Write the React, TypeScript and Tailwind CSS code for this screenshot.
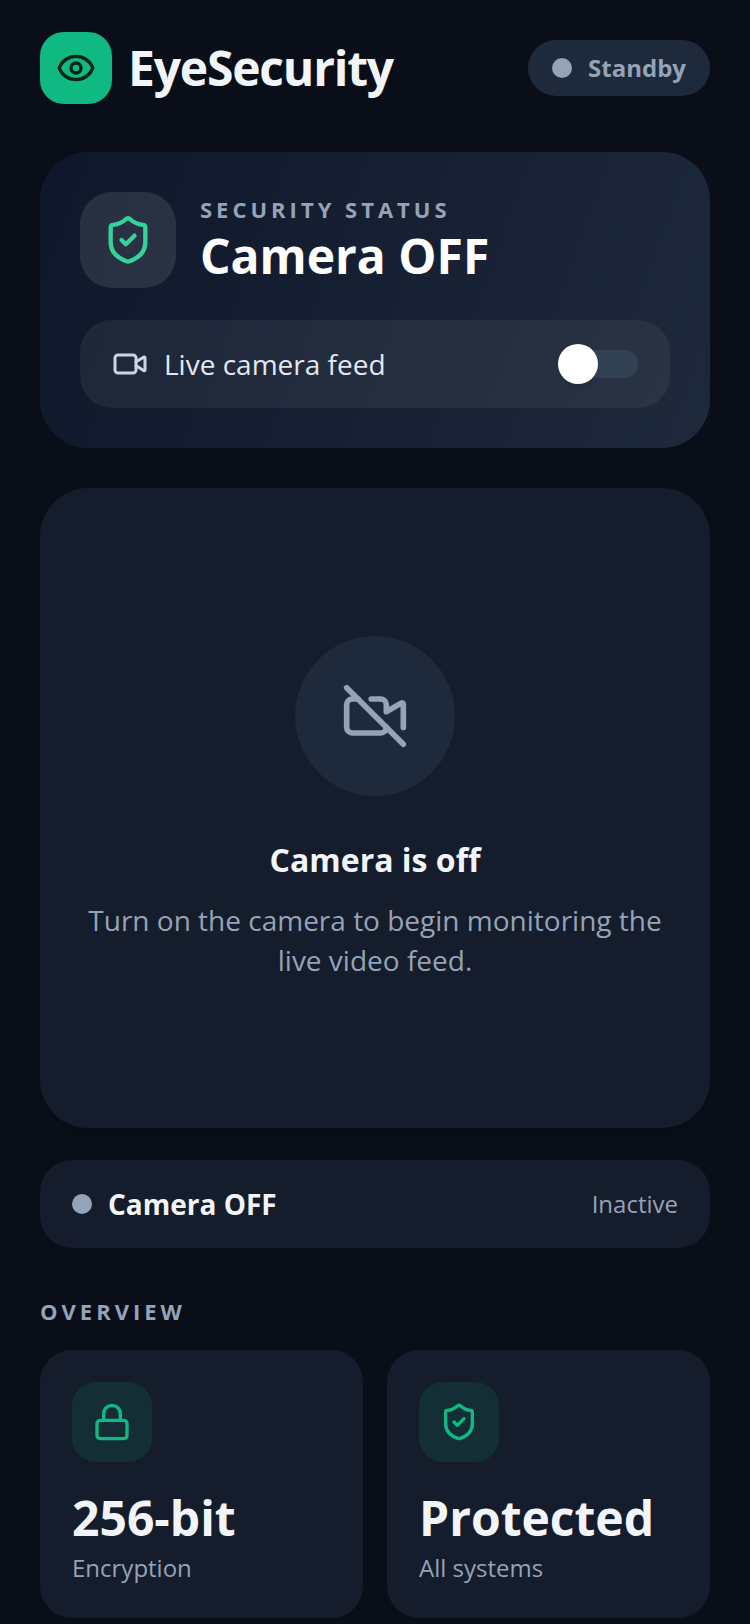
import { useState } from "react"
import { Eye, Lock, ShieldCheck, Video, VideoOff } from "lucide-react"

const stats = [
  { icon: Lock, value: "256-bit", label: "Encryption" },
  { icon: ShieldCheck, value: "Protected", label: "All systems" },
]

function Header({ on }: { on: boolean }) {
  return (
    <header className="flex items-center justify-between">
      <div className="flex items-center gap-4">
        <div className="flex size-18 items-center justify-center rounded-3xl bg-[#10b981]">
          <Eye className="size-10 text-[#04231a]" />
        </div>
        <h1 className="text-5xl leading-16 font-bold tracking-tight text-slate-100">EyeSecurity</h1>
      </div>
      <div className="flex h-14 items-center gap-4 rounded-full bg-[#1e293b] px-6">
        <span className="size-5 rounded-full bg-[#94a3b8]" />
        <span className="text-2xl leading-[30px] font-bold text-[#94a3b8]">{on ? "Active" : "Standby"}</span>
      </div>
    </header>
  )
}

export default function App() {
  const [on, setOn] = useState(false)
  const status = on ? "Camera ON" : "Camera OFF"

  return (
    <main className="min-h-screen bg-[#0a0e18] px-10 pt-8 font-['Open_Sans',sans-serif] text-slate-100">
      <Header on={on} />

      {/* Security status */}
      <section className="mt-12 rounded-[48px] bg-linear-110 from-[#0f172a] to-[#1e293b] p-10">
        <div className="flex items-center gap-6">
          <div className="flex size-24 items-center justify-center rounded-4xl bg-white/10">
            <ShieldCheck className="size-13 text-[#34d399]" />
          </div>
          <div>
            <p className="text-[22px] leading-8 font-bold tracking-[4px] text-[#94a3b8]">SECURITY STATUS</p>
            <h2 className="text-5xl leading-[62px] font-bold text-white">{status}</h2>
          </div>
        </div>

        <label className="mt-8 flex h-22 items-center gap-4 rounded-4xl bg-white/6 px-8">
          <Video className="size-9 text-[#cbd5e1]" />
          <span className="flex-1 text-[28px] leading-10 text-[#e2e8f0]">Live camera feed</span>
          <input
            type="checkbox"
            role="switch"
            checked={on}
            onChange={(e) => setOn(e.target.checked)}
            className="flex h-7 w-20 appearance-none items-center rounded-full bg-[#334155] before:size-10 before:shrink-0 before:rounded-full before:bg-white before:shadow-md checked:justify-end checked:bg-[#10b981]"
          />
        </label>
      </section>

      {/* Camera preview */}
      <section className="mt-10 flex h-160 flex-col items-center justify-center rounded-[48px] bg-[#151c2b] px-10 text-center shadow-lg shadow-black/5">
        <div className="flex size-40 items-center justify-center rounded-full bg-[#1e293b]">
          <VideoOff className="size-17 text-[#94a3b8]" />
        </div>
        <h3 className="mt-10 text-[32px] leading-12 font-bold">Camera is off</h3>
        <p className="mt-4 text-[28px] leading-10 text-[#94a3b8]">
          Turn on the camera to begin monitoring the live video feed.
        </p>
      </section>

      <section className="mt-8 flex h-22 items-center gap-4 rounded-4xl bg-[#151c2b] px-8">
        <span className="size-5 rounded-full bg-[#94a3b8]" />
        <span className="flex-1 text-[28px] leading-10 font-bold">{status}</span>
        <span className="text-2xl leading-[30px] text-[#94a3b8]">{on ? "Active" : "Inactive"}</span>
      </section>

      {/* Overview */}
      <section className="mt-12">
        <h2 className="text-[22px] leading-[30px] font-bold tracking-[4px] text-[#94a3b8]">OVERVIEW</h2>
        <div className="mt-6 grid grid-cols-2 gap-6">
          {stats.map(({ icon: Icon, value, label }) => (
            <div key={label} className="rounded-4xl bg-[#151c2b] p-8">
              <div className="flex size-20 items-center justify-center rounded-3xl bg-[#10b981]/12">
                <Icon className="size-10 text-[#10b981]" />
              </div>
              <p className="mt-6 text-5xl leading-16 font-bold">{value}</p>
              <p className="text-2xl leading-9 text-[#94a3b8]">{label}</p>
            </div>
          ))}
        </div>
      </section>
    </main>
  )
}
